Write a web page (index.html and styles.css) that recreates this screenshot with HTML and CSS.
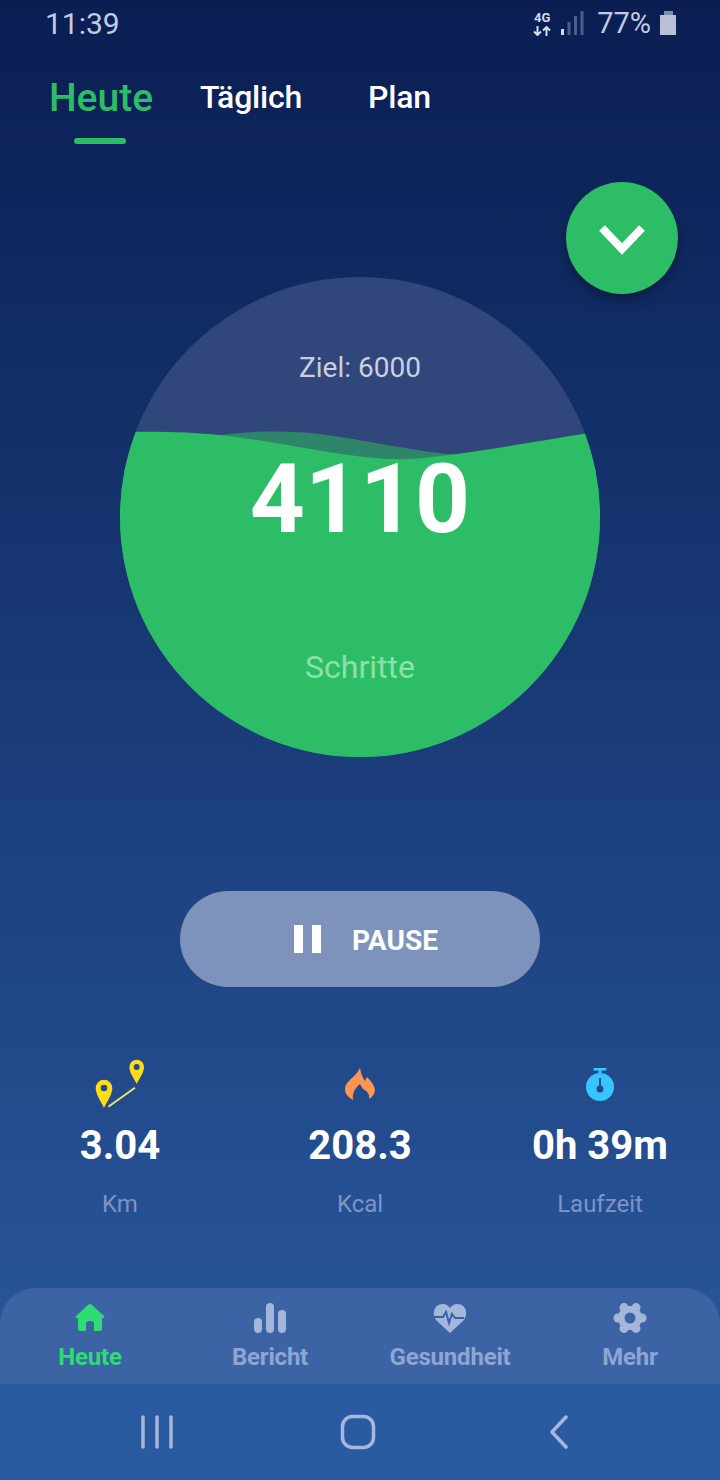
FILE: index.html
```html
<!DOCTYPE html>
<html lang="de">
<head>
    <meta charset="UTF-8">
    <meta name="viewport" content="width=device-width, initial-scale=1.0">
    <title>Heute</title>
    <link rel="stylesheet" href="styles.css">
</head>
<body>
    <div class="page">
        <div class="status-bar">
            <span class="time">11:39</span>
            <div class="status-right">
                <div class="net">
                    <span class="net-label">4G</span>
                    <svg class="net-arrows" width="18" height="10" viewBox="0 0 18 10">
                        <path d="M4.500 0V9M1 5.500L4.500 9L8 5.500M13.500 10V1M10 4.500L13.500 1L17 4.500" fill="none" stroke="#d5dbea" stroke-width="2"/>
                    </svg>
                </div>
                <svg class="signal" width="23" height="24" viewBox="0 0 23 24">
                    <rect x="0" y="18" width="3" height="6" fill="#d5dbea"/>
                    <rect x="6.500" y="11" width="3" height="13" fill="#4a5f8e"/>
                    <rect x="13" y="5" width="3" height="19" fill="#4a5f8e"/>
                    <rect x="19.500" y="0" width="3" height="24" fill="#4a5f8e"/>
                </svg>
                <span class="battery-text">77%</span>
                <div class="battery">
                    <div class="battery-cap"></div>
                    <div class="battery-body"></div>
                </div>
            </div>
        </div>

        <div class="tabs">
            <div class="tab tab-active">Heute<div class="tab-line"></div></div>
            <div class="tab">Täglich</div>
            <div class="tab">Plan</div>
        </div>

        <button class="fab">
            <svg width="48" height="36" viewBox="0 0 48 36">
                <path d="M4 8L24 29L44 8" fill="none" stroke="#fff" stroke-width="8"/>
            </svg>
        </button>

        <div class="circle">
            <svg class="wave" width="480" height="480" viewBox="0 0 480 480">
                <path d="M100 158C130 154 170 153 207 158C250 164 300 175 337 178L480 190V480H0V190Z" fill="#2f8569"/>
                <path d="M0 155C40 154 70 155 100 158C170 166 240 185 290 182C340 178 420 164 480 154V480H0Z" fill="#2dbd66"/>
            </svg>
            <div class="goal">Ziel: 6000</div>
            <div class="steps">4110</div>
            <div class="steps-label">Schritte</div>
        </div>

        <button class="pause">
            <span class="pause-icon"><i></i><i></i></span>
            <span class="pause-text">PAUSE</span>
        </button>

        <div class="stats">
            <div class="stat">
                <div class="stat-icon">
                    <svg width="60" height="52" viewBox="0 0 60 52">
                        <path d="M14 50C11 43 5.700 37 5.700 30A8.300 8.300 0 0 1 22.300 30C22.300 37 17 43 14 50Z" fill="#ffdc14"/>
                        <circle cx="14" cy="30" r="3.300" fill="#24488a"/>
                        <path d="M46.700 26C44 20 39.400 15 39.400 9A7.300 7.300 0 0 1 54 9C54 15 49.400 20 46.700 26Z" fill="#ffdc14"/>
                        <circle cx="46.700" cy="9" r="3" fill="#24488a"/>
                        <path d="M18.300 48.700L45 29.700" stroke="#ece56a" stroke-width="2"/>
                    </svg>
                </div>
                <div class="stat-value">3.04</div>
                <div class="stat-label">Km</div>
            </div>
            <div class="stat">
                <div class="stat-icon">
                    <svg width="30" height="32" viewBox="0 0 30 32">
                        <path d="M15 0C16 5 17 9 20 13L22 9C26 13 30 18 30 23C29 27 27 29 24 31C25 26 22 23 18 21L15 16C10 20 7 25 8 32C3 29 0 26 0 21C0 13 10 10 15 0Z" fill="#ff9550"/>
                    </svg>
                </div>
                <div class="stat-value">208.3</div>
                <div class="stat-label">Kcal</div>
            </div>
            <div class="stat">
                <div class="stat-icon">
                    <svg width="28" height="33" viewBox="0 0 28 33">
                        <rect x="7.500" y="0" width="13" height="2.500" fill="#38c4ff"/>
                        <rect x="12.500" y="2" width="3" height="4" fill="#38c4ff"/>
                        <circle cx="14" cy="19" r="14" fill="#38c4ff"/>
                        <rect x="13" y="10" width="2" height="10" fill="#24488a"/>
                        <circle cx="14" cy="21" r="3.500" fill="#24488a"/>
                    </svg>
                </div>
                <div class="stat-value">0h 39m</div>
                <div class="stat-label">Laufzeit</div>
            </div>
        </div>

        <div class="tabbar">
            <div class="tabbar-item tabbar-active">
                <svg width="30" height="28" viewBox="0 0 30 28">
                    <path d="M15 0Q16 0 17 1L29 12Q30 14 28 14H27V25Q27 27 25 27H19V20Q19 17 15 17Q11 17 11 20V27H5Q3 27 3 25V14H2Q0 14 1 12L13 1Q14 0 15 0Z" fill="#2fdb75"/>
                </svg>
                <span>Heute</span>
            </div>
            <div class="tabbar-item">
                <svg width="32" height="30" viewBox="0 0 32 30">
                    <rect x="0" y="15" width="8" height="15" rx="4" fill="#a3b7da"/>
                    <rect x="12" y="0" width="8" height="30" rx="4" fill="#a3b7da"/>
                    <rect x="24" y="7" width="8" height="23" rx="4" fill="#a3b7da"/>
                </svg>
                <span>Bericht</span>
            </div>
            <div class="tabbar-item">
                <svg width="34" height="30" viewBox="0 0 34 30">
                    <path d="M17 30L4 18Q0 13 1 9Q2 1 10 1Q14 1 17 5Q20 1 24 1Q32 1 33 9Q34 13 30 18Z" fill="#a3b7da"/>
                    <path d="M1 14H10L13 9L16 20L19 11L22 15H31" fill="none" stroke="#3c64a5" stroke-width="2"/>
                </svg>
                <span>Gesundheit</span>
            </div>
            <div class="tabbar-item">
                <svg width="34" height="30" viewBox="-17 -15 34 30">
                    <g fill="#a3b7da">
                        <circle r="12"/>
                        <circle cx="12" r="4.500"/>
                        <circle cx="-12" r="4.500"/>
                        <circle cx="6" cy="10.400" r="4.500"/>
                        <circle cx="-6" cy="10.400" r="4.500"/>
                        <circle cx="6" cy="-10.400" r="4.500"/>
                        <circle cx="-6" cy="-10.400" r="4.500"/>
                    </g>
                    <circle r="5.500" fill="#3c64a5"/>
                </svg>
                <span>Mehr</span>
            </div>
        </div>

        <div class="navkeys">
            <svg width="34" height="34" viewBox="0 0 34 34">
                <path d="M3 2V32M17 2V32M31 2V32" stroke="#a5b8dc" stroke-width="3.500" stroke-linecap="round"/>
            </svg>
            <svg width="36" height="36" viewBox="0 0 36 36">
                <rect x="2.500" y="2.500" width="31" height="31" rx="10" fill="none" stroke="#a5b8dc" stroke-width="3.500"/>
            </svg>
            <svg width="22" height="34" viewBox="0 0 22 34">
                <path d="M18 2L4 17L18 32" fill="none" stroke="#a5b8dc" stroke-width="3.500" stroke-linecap="round" stroke-linejoin="round"/>
            </svg>
        </div>
    </div>
</body>
</html>
```

FILE: styles.css
```css
body {
    margin: 0;
    font-family: Roboto, "Liberation Sans", sans-serif;
}
.page {
    position: relative;
    display: flex;
    flex-direction: column;
    width: 720px;
    height: 1480px;
    overflow: hidden;
    background: linear-gradient(180deg, #0a1e52 0%, #2b5ba1 100%);
}
.status-bar {
    display: flex;
    justify-content: space-between;
    align-items: center;
    height: 46px;
    padding: 0 44px 2px 45px;
    color: #c3cbe2;
    font-size: 30px;
}
.status-right {
    display: flex;
    align-items: center;
}
.net {
    display: flex;
    flex-direction: column;
    align-items: center;
    gap: 3px;
    width: 18px;
    margin-top: 1px;
}
.net-label {
    font-size: 13px;
    font-weight: 700;
    line-height: 11px;
    color: #d5dbea;
}
.signal {
    margin: 0 13px 0 10px;
}
.battery-text {
    font-size: 29px;
}
.battery {
    display: flex;
    flex-direction: column;
    align-items: center;
    width: 16px;
    margin-left: 9px;
}
.battery-cap {
    width: 9px;
    height: 4px;
    background: #7f8cab;
}
.battery-body {
    width: 16px;
    height: 20px;
    background: #b8c0d8;
}
.tabs {
    display: grid;
    grid-template-columns: 150px 150px 147px;
    align-items: start;
    height: 96px;
    padding-left: 26px;
    color: #fff;
    font-size: 32px;
    font-weight: 500;
    line-height: 38px;
    letter-spacing: -0.2px;
    text-align: center;
}
.tab {
    padding-top: 30px;
}
.tab-active {
    padding-top: 28px;
    color: #2dbd66;
    font-size: 39px;
    line-height: 44px;
    letter-spacing: 0;
}
.tab-line {
    width: 52px;
    height: 6px;
    margin: 18px 0 0 48px;
    border-radius: 3px;
    background: #2dbd66;
}
.fab {
    position: absolute;
    top: 182px;
    right: 42px;
    display: flex;
    justify-content: center;
    align-items: center;
    width: 112px;
    height: 112px;
    padding: 0;
    border: none;
    border-radius: 50%;
    background: #2dbd66;
    box-shadow: 0 6px 12px rgba(0, 0, 0, 0.3);
}
.circle {
    position: relative;
    display: flex;
    flex-direction: column;
    align-items: center;
    width: 480px;
    height: 480px;
    margin: 133px auto 0;
    overflow: hidden;
    border-radius: 50%;
    background: #31467a;
}
.wave {
    position: absolute;
    top: 0;
    left: 0;
}
.goal {
    position: relative;
    margin-top: 73px;
    color: #c8d0e2;
    font-size: 28px;
    line-height: 36px;
}
.steps {
    position: relative;
    margin-top: 58px;
    color: #fff;
    font-size: 96px;
    font-weight: 700;
    line-height: 110px;
}
.steps-label {
    position: relative;
    margin-top: 93px;
    color: #8fe0a8;
    font-size: 32px;
    line-height: 40px;
}
.pause {
    display: flex;
    justify-content: center;
    align-items: center;
    width: 360px;
    height: 96px;
    margin: 134px auto 0;
    padding: 0 0 0 12px;
    border: none;
    border-radius: 48px;
    background: #7d93bb;
    color: #fff;
    font-family: inherit;
    font-size: 28px;
    font-weight: 700;
}
.pause-text {
    padding-top: 2px;
}
.pause-icon {
    display: flex;
    gap: 9px;
    margin-right: 31px;
}
.pause-icon i {
    width: 9px;
    height: 28px;
    background: #fff;
}
.stats {
    display: grid;
    grid-template-columns: repeat(3, 240px);
    margin-top: 71px;
    text-align: center;
}
.stat-icon {
    display: flex;
    justify-content: center;
    align-items: center;
    height: 52px;
}
.stat-value {
    margin-top: 13px;
    color: #fff;
    font-size: 40px;
    font-weight: 700;
    line-height: 46px;
}
.stat-label {
    margin-top: 19px;
    color: #7d95c5;
    font-size: 24px;
    line-height: 32px;
}
.tabbar {
    display: grid;
    grid-template-columns: repeat(4, 180px);
    height: 96px;
    margin-top: auto;
    border-radius: 36px 36px 0 0;
    background: #3c64a5;
}
.tabbar-item {
    display: flex;
    flex-direction: column;
    align-items: center;
    padding-top: 15px;
    color: #8ea6d2;
    font-size: 24px;
    font-weight: 700;
    line-height: 30px;
    letter-spacing: -0.2px;
}
.tabbar-item svg {
    height: 30px;
    margin-bottom: 9px;
}
.tabbar-active {
    color: #2fdb75;
}
.navkeys {
    display: grid;
    grid-template-columns: repeat(3, 201px);
    justify-content: center;
    justify-items: center;
    align-items: center;
    height: 96px;
    padding-right: 5px;
    background: #2a5a9f;
}
```
